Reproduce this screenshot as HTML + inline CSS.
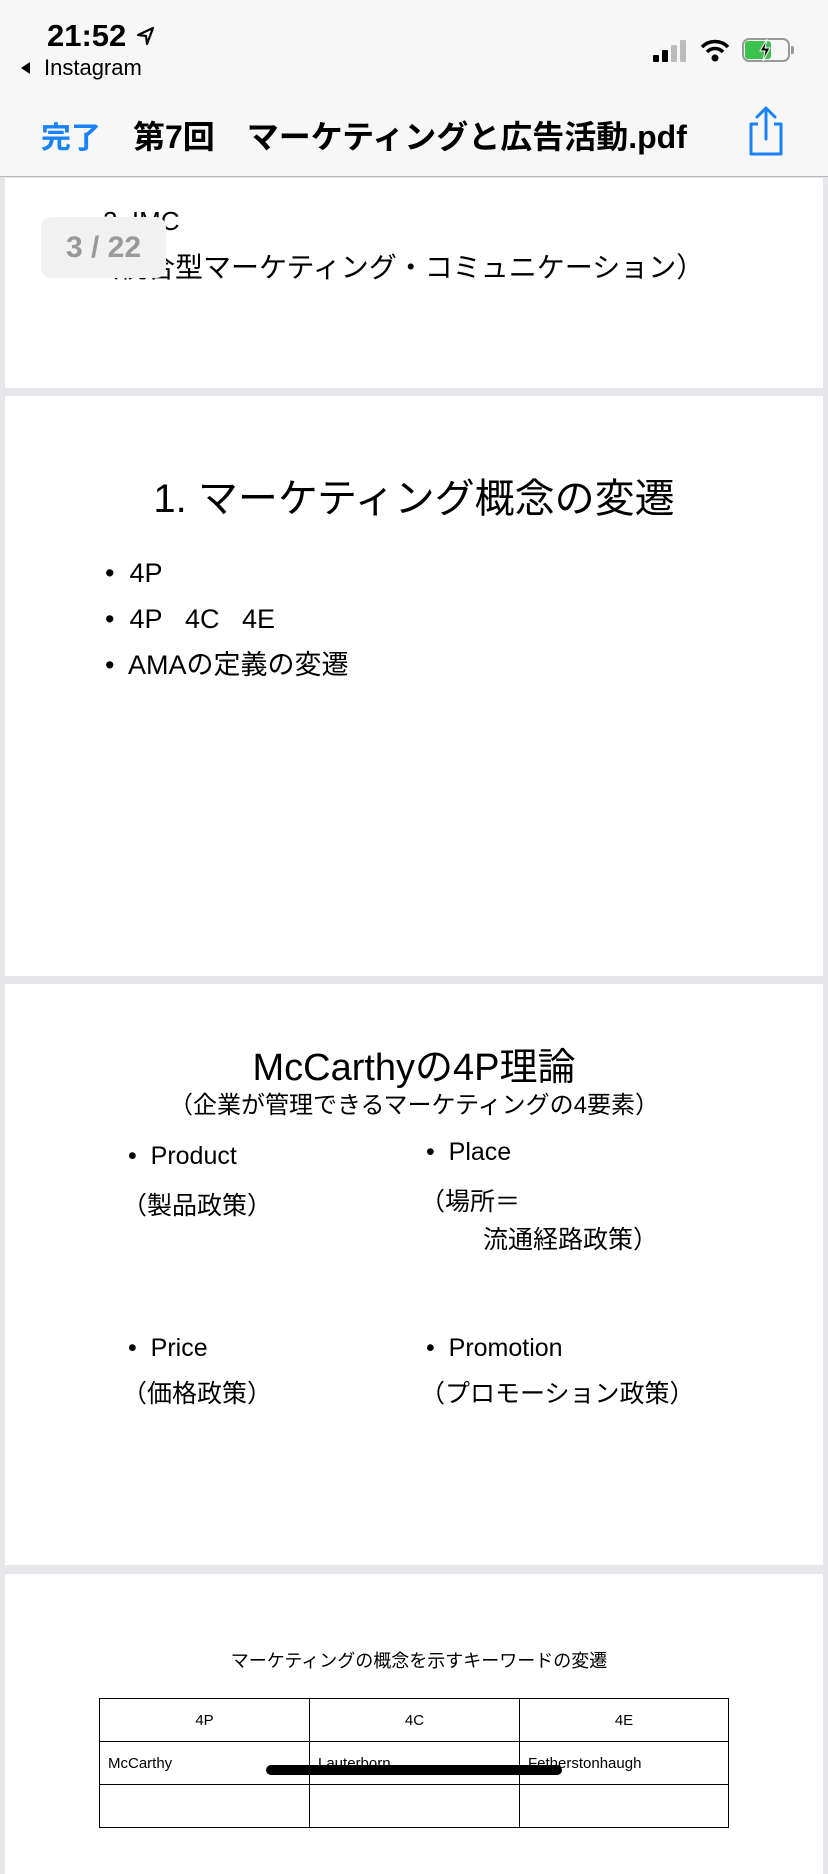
<!DOCTYPE html>
<html><head><meta charset="utf-8"><style>
*{margin:0;padding:0;box-sizing:border-box}
body{width:828px;height:1792px;overflow:hidden;background:#e6e6eb;font-family:"Liberation Sans","Noto Sans CJK JP",sans-serif;position:relative;color:#000}
.a{position:absolute;white-space:nowrap}
.hdr{position:absolute;left:0;top:0;width:828px;height:177px;background:#f7f7f7;border-bottom:1px solid #b8b8b8}
.pg{position:absolute;left:5px;width:818px;background:#fff}
td{border:1.5px solid #000;font-size:15px;height:43px;padding-left:8px}
</style></head><body>
<div class="hdr">
 <div class="a" style="left:47px;top:18px;font-size:31px;font-weight:bold">21:52</div>
 <svg class="a" style="left:136px;top:26px" width="20" height="20" viewBox="0 0 20 20"><path d="M17 2 L2 9 L10 10 L11 18 Z" fill="none" stroke="#000" stroke-width="2.2" stroke-linejoin="round"/></svg>
 <div class="a" style="left:21px;top:62px;width:0;height:0;border-top:6px solid transparent;border-bottom:6px solid transparent;border-right:9px solid #000"></div>
 <div class="a" style="left:44px;top:55px;font-size:22px">Instagram</div>
 <div class="a" style="left:653px;top:55px;width:6px;height:7px;background:#000;border-radius:1px"></div>
 <div class="a" style="left:662px;top:50px;width:6px;height:12px;background:#000;border-radius:1px"></div>
 <div class="a" style="left:671px;top:45px;width:6px;height:17px;background:#bbb;border-radius:1px"></div>
 <div class="a" style="left:680px;top:40px;width:6px;height:22px;background:#bbb;border-radius:1px"></div>
 <svg class="a" style="left:700px;top:38px" width="30" height="24" viewBox="0 0 30 24"><path d="M2 9 A18 18 0 0 1 28 9" fill="none" stroke="#000" stroke-width="3.5"/><path d="M7 14 A11 11 0 0 1 23 14" fill="none" stroke="#000" stroke-width="3.5"/><circle cx="15" cy="20" r="3.5" fill="#000"/></svg>
 <div class="a" style="left:742px;top:38px;width:48px;height:24px;border:2px solid #999;border-radius:7px"></div>
 <div class="a" style="left:745px;top:41px;width:26px;height:18px;background:#3ec24f;border-radius:3px"></div>
 <div class="a" style="left:791px;top:46px;width:3px;height:8px;background:#999;border-radius:0 2px 2px 0"></div>
 <svg class="a" style="left:758px;top:38px" width="14" height="24" viewBox="0 0 14 24"><path d="M9 1 L2 13 H7 L5 23 L12 10 H7 Z" fill="#000" stroke="#fff" stroke-width="1"/></svg>
 <div class="a" style="left:41px;top:113px;font-size:30px;color:#1a82f7;font-weight:bold">完了</div>
 <div class="a" style="left:133px;top:112px;font-size:32px;font-weight:bold">第7回　マーケティングと広告活動.pdf</div>
 <svg class="a" style="left:744px;top:106px" width="44" height="50" viewBox="0 0 44 50"><path d="M14 18 H7 V48 H37 V18 H30" fill="none" stroke="#1a82f7" stroke-width="3" stroke-linejoin="round"/><path d="M22 33 V3 M13 11 L22 2 L31 11" fill="none" stroke="#1a82f7" stroke-width="3" stroke-linecap="round" stroke-linejoin="round"/></svg>
</div>

<div class="pg" style="top:178px;height:210px;overflow:hidden">
 <div class="a" style="left:98px;top:28px;font-size:26px">2. IMC</div>
 <div class="a" style="left:86px;top:68px;font-size:28px">（統合型マーケティング・コミュニケーション）</div>
 <div class="a" style="left:36px;top:39px;width:125px;height:61px;background:#f1f1f1;border-radius:10px;font-size:30px;color:#999;text-align:center;line-height:61px;font-weight:bold">3 / 22</div>
</div>

<div class="pg" style="top:396px;height:580px">
 <div class="a" style="left:0;width:818px;text-align:center;top:70px;font-size:40px">1. マーケティング概念の変遷</div>
 <div class="a" style="left:100px;top:154px;font-size:27px;line-height:46px">•&nbsp; 4P<br>•&nbsp; 4P&nbsp;&nbsp; 4C&nbsp;&nbsp; 4E<br>•&nbsp; AMAの定義の変遷</div>
</div>

<div class="pg" style="top:984px;height:581px">
 <div class="a" style="left:0;width:818px;text-align:center;top:52px;font-size:38px">McCarthyの4P理論</div>
 <div class="a" style="left:0;width:818px;text-align:center;top:101px;font-size:24px">（企業が管理できるマーケティングの4要素）</div>
 <div class="a" style="left:123px;top:158px;font-size:25px">•&nbsp; Product</div>
 <div class="a" style="left:117px;top:202px;font-size:25px">（製品政策）</div>
 <div class="a" style="left:421px;top:154px;font-size:25px">•&nbsp; Place</div>
 <div class="a" style="left:415px;top:198px;font-size:25px">（場所＝</div>
 <div class="a" style="left:478px;top:236px;font-size:25px">流通経路政策）</div>
 <div class="a" style="left:123px;top:350px;font-size:25px">•&nbsp; Price</div>
 <div class="a" style="left:117px;top:390px;font-size:25px">（価格政策）</div>
 <div class="a" style="left:421px;top:350px;font-size:25px">•&nbsp; Promotion</div>
 <div class="a" style="left:415px;top:390px;font-size:25px">（プロモーション政策）</div>
</div>

<div class="pg" style="top:1574px;height:300px">
 <div class="a" style="left:0;width:828px;text-align:center;top:73px;font-size:18px">マーケティングの概念を示すキーワードの変遷</div>
 <table class="a" style="left:94px;top:124px;width:630px;border-collapse:collapse">
  <tr><td style="text-align:center;width:210px;padding:0">4P</td><td style="text-align:center;width:210px;padding:0">4C</td><td style="text-align:center;padding:0">4E</td></tr>
  <tr><td>McCarthy</td><td>Lauterborn</td><td>Fetherstonhaugh</td></tr>
  <tr><td></td><td></td><td></td></tr>
 </table>
</div>
<div class="a" style="left:266px;top:1765px;width:296px;height:10px;background:#000;border-radius:5px"></div>
</body></html>
